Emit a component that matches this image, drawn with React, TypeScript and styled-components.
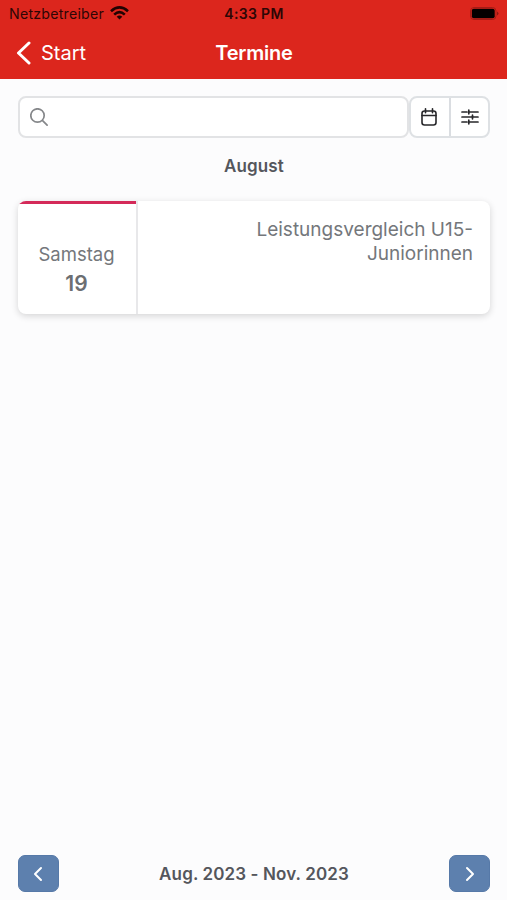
import React from "react";
import styled, { createGlobalStyle } from "styled-components";

const GlobalStyle = createGlobalStyle`
  * { box-sizing: border-box; }
  body { margin: 0; background: #fcfcfd; font-family: Inter, "Liberation Sans", sans-serif; }
  button { font: inherit; color: inherit; }
`;

const Label = styled.span<{ $size: number; $weight?: number; $spacing?: number }>`
  font-size: ${(p) => p.$size}px;
  font-weight: ${(p) => p.$weight ?? 400};
  letter-spacing: ${(p) => p.$spacing ?? 0}px;
  white-space: nowrap;
`;

const Screen = styled.div`
  height: 900px;
  display: flex;
  flex-direction: column;
  overflow: hidden;
`;

const Header = styled.header`
  height: 79px;
  flex: none;
  background: #dc261d;
`;

const StatusBar = styled.div`
  height: 28px;
  display: grid;
  grid-template-columns: 1fr auto 1fr;
  align-items: center;
  padding: 0 8px 1px 9px;
  color: #2e0605;
`;

const Carrier = styled.div`
  display: flex;
  align-items: center;
  gap: 6px;
`;

const BatteryIcon = styled.svg`
  display: block;
  justify-self: end;
`;

const NavBar = styled.nav`
  height: 51px;
  display: grid;
  grid-template-columns: 1fr auto 1fr;
  align-items: center;
  padding: 0 15px 2px 16px;
  color: #fff;
`;

const BackButton = styled.button`
  display: flex;
  align-items: center;
  gap: 9px;
  padding: 0;
  border: 0;
  background: none;
`;

const Content = styled.main`
  flex: 1;
  padding: 17px 17px 0 18px;
`;

const SearchRow = styled.div`
  display: flex;
  height: 42px;
`;

const SearchField = styled.label`
  flex: 1;
  display: flex;
  align-items: center;
  gap: 8px;
  padding-left: 10px;
  background: #fff;
  border: 2px solid #e2e3e5;
  border-radius: 8px;
`;

const SearchInput = styled.input`
  flex: 1;
  border: 0;
  outline: 0;
  background: none;
  font: inherit;
`;

const ToolGroup = styled.div`
  display: grid;
  grid-template-columns: 38px 39px;
  width: 81px;
  background: #fff;
  border: 2px solid #dee1e4;
  border-radius: 8px;
`;

const ToolButton = styled.button`
  display: flex;
  align-items: center;
  justify-content: center;
  padding: 0 2px 0 0;
  border: 0;
  background: none;
  color: #27272a;
  & + & { padding-right: 0; border-left: 2px solid #dadde1; }
`;

const Month = styled.div`
  margin-top: 16px;
  height: 24px;
  line-height: 24px;
  text-align: center;
  color: #54565c;
`;

const EventCard = styled.article`
  display: flex;
  height: 113px;
  margin-top: 23px;
  background: #fff;
  border-radius: 8px;
  overflow: hidden;
  box-shadow: 0 2px 7px rgba(0, 0, 0, 0.16);
`;

const EventDate = styled.div`
  width: 120px;
  display: flex;
  flex-direction: column;
  align-items: center;
  padding: 39px 1px 0 0;
  line-height: 29px;
  color: #74777b;
  border-right: 2px solid #e8e8ea;
  background: linear-gradient(#d42a59, #d42a59) 0 0 / 100% 3px no-repeat;
`;

const DayNumber = styled(Label)`
  color: #6b6e72;
`;

const EventTitle = styled.div`
  flex: 1;
  padding: 17px 17px 0 100px;
  text-align: right;
  line-height: 23px;
  color: #74777b;
`;

const Pager = styled.footer`
  display: flex;
  align-items: center;
  justify-content: space-between;
  padding: 0 17px 8px 18px;
  color: #54565c;
`;

const PageButton = styled.button`
  display: flex;
  align-items: center;
  justify-content: center;
  width: 41px;
  height: 37px;
  padding: 0 1px 0 0;
  border: 1px solid #5679a8;
  border-radius: 7px;
  background: #5d80ae;
  color: #fff;
  &:last-child { padding: 0 0 0 1px; }
`;

const Icon = styled.svg`
  display: block;
  flex: none;
  fill: none;
  stroke: currentColor;
  stroke-linecap: round;
  stroke-linejoin: round;
`;

export default function App() {
  return (
    <Screen>
      <GlobalStyle />
      <Header>
        <StatusBar>
          <Carrier>
            <Label $size={14.2} $spacing={0.22}>Netzbetreiber</Label>
            <Icon width="19" height="15" viewBox="0 0 19 15" strokeWidth="2.6">
              <g strokeLinecap="butt" stroke="#210302">
                <path d="M1 5.2Q9.5-2.4 18 5.2" />
                <path d="M4.2 8.6Q9.5 3.8 14.8 8.6" />
                <path d="M6.7 10.8Q9.5 8.2 12.3 10.8L9.5 13.6Z" fill="#210302" stroke="none" />
              </g>
            </Icon>
          </Carrier>
          <Label $size={14} $weight={600} $spacing={0.35}>4:33 PM</Label>
          <BatteryIcon width="29" height="13" viewBox="0 0 29 13">
            <rect x="0.5" y="0.5" width="25.5" height="12" rx="3.5" fill="none" stroke="#a51c16" />
            <rect x="1.8" y="1.8" width="22.9" height="9.4" rx="2" fill="#050000" />
            <path d="M27 4.5v4q1.5-.8 1.5-2t-1.5-2" fill="#8d1712" />
          </BatteryIcon>
        </StatusBar>
        <NavBar>
          <BackButton>
            <Icon width="16" height="24" viewBox="0 0 16 24" strokeWidth="3">
              <path d="M13 2 2.5 12 13 22" />
            </Icon>
            <Label $size={20}>Start</Label>
          </BackButton>
          <Label $size={20} $weight={600} $spacing={-0.2}>Termine</Label>
        </NavBar>
      </Header>
      <Content>
        <SearchRow>
          <SearchField>
            <Icon width="18" height="18" viewBox="0 0 18 18" strokeWidth="1.7" color="#85878a">
              <circle cx="7.5" cy="7.5" r="6.7" />
              <path d="m12.6 12.6 4.5 4.5" />
            </Icon>
            <SearchInput aria-label="Suche" />
          </SearchField>
          <ToolGroup>
            <ToolButton aria-label="Kalender">
              <Icon width="16" height="18" viewBox="0 0 16 18" strokeWidth="1.6">
                <rect x="1" y="3" width="14" height="14" rx="2.5" />
                <path d="M1 7.5h14M4.5.8v4M11.5.8v4" />
              </Icon>
            </ToolButton>
            <ToolButton aria-label="Filter">
              <Icon width="18" height="16" viewBox="0 0 18 16" strokeWidth="1.7">
                <path d="M1 3h5M8 3h9M1 8h9.5M12.5 8H17M1 13h5M8 13h9M7.8 1.2v3.6M11.5 6.2v3.6M7.8 11.2v3.6" />
              </Icon>
            </ToolButton>
          </ToolGroup>
        </SearchRow>
        <Month><Label $size={17} $weight={600} $spacing={0.1}>August</Label></Month>
        <EventCard>
          <EventDate>
            <Label $size={18.5}>Samstag</Label>
            <DayNumber $size={21} $weight={600}>19</DayNumber>
          </EventDate>
          <EventTitle>
            <Label $size={19}>Leistungsvergleich U15-<br />Juniorinnen</Label>
          </EventTitle>
        </EventCard>
      </Content>
      <Pager>
        <PageButton aria-label="Zurück">
          <Icon width="10" height="16" viewBox="0 0 10 16" strokeWidth="2"><path d="M8 2 2 8l6 6" /></Icon>
        </PageButton>
        <Label $size={17} $weight={600} $spacing={0.12}>Aug. 2023 - Nov. 2023</Label>
        <PageButton aria-label="Weiter">
          <Icon width="10" height="16" viewBox="0 0 10 16" strokeWidth="2"><path d="m2 2 6 6-6 6" /></Icon>
        </PageButton>
      </Pager>
    </Screen>
  );
}
